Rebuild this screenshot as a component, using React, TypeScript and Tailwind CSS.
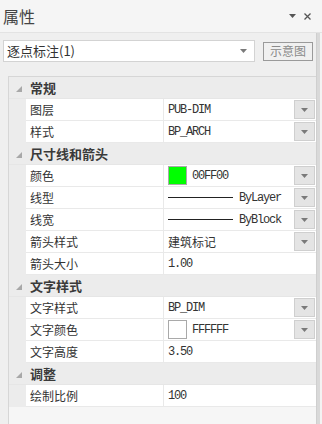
import React from 'react'

const cjk = "font-['Noto_Sans_CJK_SC','Noto_Sans',sans-serif]"
const mono = "font-['Liberation_Mono','DejaVu_Sans_Mono',monospace] text-[12px] tracking-[-1.2px]"

function DropArrow() {
  return (
    <svg width="7" height="4" viewBox="0 0 7 4">
      <polygon points="0,0 7,0 3.5,4" fill="#7a7a7a" />
    </svg>
  )
}

function DropButton() {
  return (
    <div className="w-[21px] h-[19px] mr-[1px] shrink-0 bg-[#e4e4e4] border border-[#cfcfcf] flex items-center justify-center">
      <DropArrow />
    </div>
  )
}

function GroupRow({ title }: { title: string }) {
  return (
    <div className="h-[22px] flex items-center bg-[#ececec] border-b border-[#e6e6e6]">
      <div className="w-[17px] flex justify-center pl-[2px] pt-[3px]">
        <svg width="6" height="6" viewBox="0 0 6 6">
          <polygon points="6,0 6,6 0,6" fill="#a8a8a8" />
        </svg>
      </div>
      <span className={`pl-[4px] text-[13px] font-bold text-[#3a3a3a] ${cjk}`}>{title}</span>
    </div>
  )
}

function ItemRow({
  label,
  children,
  drop = false,
}: {
  label: string
  children: React.ReactNode
  drop?: boolean
}) {
  return (
    <div className="h-[22px] flex bg-[#ececec]">
      <div className="w-[17px] shrink-0" />
      <div className={`w-[138px] shrink-0 bg-white border-b border-r border-[#e9e9e9] pl-[4px] flex items-center text-[12px] text-[#333] ${cjk}`}>
        {label}
      </div>
      <div className="flex-1 bg-white border-b border-[#e9e9e9] flex items-center pl-[4px]">
        <div className="flex-1 flex items-center min-w-0 text-[#333]">{children}</div>
        {drop && <DropButton />}
      </div>
    </div>
  )
}

// line sample + linetype name
function LineSample({ text }: { text: string }) {
  return (
    <div className="flex items-center w-[113px] justify-between">
      <div className="w-[65px] h-px bg-[#222]" />
      <span className={mono}>{text}</span>
    </div>
  )
}

function Swatch({ color, text }: { color: string; text: string }) {
  return (
    <div className="flex items-center">
      <div className="w-[19px] h-[19px] border border-[#a9a9a9]" style={{ backgroundColor: color }} />
      <span className={`ml-[5px] ${mono}`}>{text}</span>
    </div>
  )
}

export default function App() {
  return (
    <div className={`w-[322px] h-[424px] bg-[#efefef] flex flex-col overflow-hidden ${cjk}`}>
      <div className="h-[33px] shrink-0 bg-[#f5f5f5] border-b border-[#e3e3e3] flex items-center pl-[3px] pr-[11px]">
        <span className="flex-1 text-[16px] text-[#444] leading-none">属性</span>
        <svg width="7" height="4" viewBox="0 0 7 4" className="mr-[8px]">
          <polygon points="0,0 7,0 3.5,4" fill="#555" />
        </svg>
        <svg width="7" height="7" viewBox="0 0 7 7">
          <path d="M0.5 0.5 L6.5 6.5 M6.5 0.5 L0.5 6.5" stroke="#555" strokeWidth="1.3" />
        </svg>
      </div>

      <div className="flex-1 flex min-h-0">
        <div className="flex-1 flex flex-col pl-[3px] pt-[7px] min-w-0">
          <div className="flex items-center">
            <div className="w-[252px] h-[22px] bg-white border border-[#d3d3d3] flex items-center pl-[3px] pr-[7px]">
              <span className="flex-1 text-[13px] text-[#333]">逐点标注(1)</span>
              <DropArrow />
            </div>
            <div className="ml-[8px] w-[50px] h-[19px] border border-[#9a9a9a] bg-[#f0f0f0] flex items-center justify-center text-[12px] text-[#8a8a8a]">
              示意图
            </div>
          </div>

          <div className="ml-[5px] mt-[14px] flex-1 border-l border-t border-[#d6d6d6] bg-[#f6f6f6] flex flex-col">
            <GroupRow title="常规" />
            <ItemRow label="图层" drop>
              <span className={mono}>PUB-DIM</span>
            </ItemRow>
            <ItemRow label="样式" drop>
              <span className={mono}>BP_ARCH</span>
            </ItemRow>
            <GroupRow title="尺寸线和箭头" />
            <ItemRow label="颜色" drop>
              <Swatch color="#00ff00" text="00FF00" />
            </ItemRow>
            <ItemRow label="线型" drop>
              <LineSample text="ByLayer" />
            </ItemRow>
            <ItemRow label="线宽" drop>
              <LineSample text="ByBlock" />
            </ItemRow>
            <ItemRow label="箭头样式" drop>
              <span className="text-[12px]">建筑标记</span>
            </ItemRow>
            <ItemRow label="箭头大小">
              <span className={mono}>1.00</span>
            </ItemRow>
            <GroupRow title="文字样式" />
            <ItemRow label="文字样式" drop>
              <span className={mono}>BP_DIM</span>
            </ItemRow>
            <ItemRow label="文字颜色" drop>
              <Swatch color="#ffffff" text="FFFFFF" />
            </ItemRow>
            <ItemRow label="文字高度">
              <span className={mono}>3.50</span>
            </ItemRow>
            <GroupRow title="调整" />
            <ItemRow label="绘制比例">
              <span className={mono}>100</span>
            </ItemRow>
          </div>
        </div>
        <div className="w-[6px] shrink-0 bg-[#d9d9d9] border-l border-[#cfcfcf] border-r-2 border-r-[#f3f3f3]" />
      </div>
    </div>
  )
}
